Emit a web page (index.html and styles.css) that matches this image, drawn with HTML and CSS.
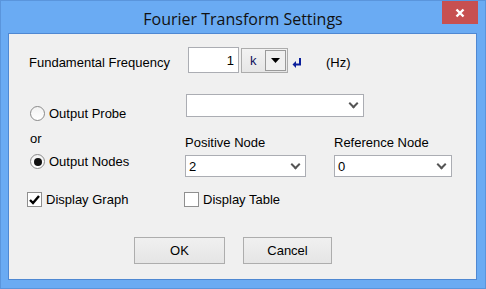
FILE: index.html
```html
<!DOCTYPE html>
<html lang="en">
<head>
  <meta charset="UTF-8">
  <title>Fourier Transform Settings</title>
  <link rel="stylesheet" href="styles.css">
</head>
<body>
  <div class="window">
    <div class="titlebar">
      <span class="title">Fourier Transform Settings</span>
      <button class="close-btn" aria-label="Close">
        <svg width="10" height="10" viewBox="0 0 10 10"><path d="M1.5 1.5 L8.5 8.5 M8.5 1.5 L1.5 8.5" stroke="#fff" stroke-width="2.4"/></svg>
      </button>
    </div>
    <div class="client">
      <div class="row freq-row">
        <span class="freq-label">Fundamental Frequency</span>
        <div class="freq-input">1</div>
        <div class="unit-combo">
          <span class="unit-text">k</span>
          <span class="unit-btn"><svg width="9" height="5" viewBox="0 0 9 5"><path d="M0 0 H9 L4.5 5 Z" fill="#000"/></svg></span>
        </div>
        <svg class="enter-icon" width="10" height="10" viewBox="0 0 10 10"><path d="M8 0 V6.5 H3" stroke="#0b1f9c" stroke-width="2" fill="none"/><path d="M0.5 6.5 L4 3 V10 Z" fill="#0b1f9c"/></svg>
        <span class="hz">(Hz)</span>
      </div>

      <div class="row probe-row">
        <label class="option col1 probe-option"><span class="radio"></span>Output Probe</label>
        <div class="select probe-select"><span></span><i class="chev"></i></div>
      </div>

      <div class="row label-row">
        <span class="col1 or">or</span>
        <span class="col2 node-label">Positive Node</span>
        <span class="node-label">Reference Node</span>
      </div>

      <div class="row nodes-row">
        <label class="option col1 nodes-option"><span class="radio checked"></span>Output Nodes</label>
        <div class="select pos-select"><span>2</span><i class="chev"></i></div>
        <div class="select ref-select"><span>0</span><i class="chev"></i></div>
      </div>

      <div class="row check-row">
        <label class="option check-first"><span class="checkbox checked"><svg width="11" height="10" viewBox="0 0 11 10"><path d="M1 5 L4 8 L10 1" stroke="#000" stroke-width="2.4" fill="none"/></svg></span>Display Graph</label>
        <label class="option"><span class="checkbox"></span>Display Table</label>
      </div>

      <div class="row button-row">
        <button class="dlg-btn ok-btn">OK</button>
        <button class="dlg-btn cancel-btn">Cancel</button>
      </div>
    </div>
  </div>
</body>
</html>
```

FILE: styles.css
```css
* {
  margin: 0;
  padding: 0;
  box-sizing: border-box;
}
body {
  width: 486px;
  height: 289px;
  overflow: hidden;
  font-family: 'Liberation Sans', Arial, sans-serif;
  font-size: 13px;
  color: #000;
}
.window {
  width: 486px;
  height: 289px;
  background: #6aabf3;
  border: 1px solid #5a95dc;
  display: flex;
  flex-direction: column;
}
.titlebar {
  position: relative;
  height: 32px;
  display: flex;
  justify-content: center;
  align-items: center;
  padding-top: 3px;
}
.title {
  font-family: 'Open Sans', 'Noto Sans', sans-serif;
  font-size: 16px;
  color: #111;
}
.close-btn {
  position: absolute;
  top: 0;
  right: 7px;
  width: 36px;
  height: 23px;
  border: none;
  background: #c75050;
  display: flex;
  align-items: center;
  justify-content: center;
}
.client {
  flex: 1;
  margin: 0 8px 8px 7px;
  background: #f0f0f0;
  border: 1px solid #4f88d2;
  padding: 13px 0 0 20px;
}
.row {
  display: flex;
  align-items: center;
}
.col1 {
  width: 156px;
  flex-shrink: 0;
}
.freq-row {
  height: 26px;
}
.freq-label {
  width: 159px;
  padding-top: 5px;
}
.freq-input {
  width: 51px;
  height: 26px;
  background: #fff;
  border: 1px solid #abadb3;
  text-align: right;
  padding: 5px 4px 0 0;
}
.unit-combo {
  width: 47px;
  height: 25px;
  margin-left: 2px;
  border: 1px solid #acacac;
  background: linear-gradient(#f2f2f2, #e6e6e6);
  display: flex;
  align-items: center;
  padding-left: 8px;
}
.unit-text {
  width: 15px;
  color: #10105a;
}
.unit-btn {
  width: 21px;
  height: 21px;
  border: 1px solid #9a9a9a;
  background: #f0f0f0;
  display: flex;
  align-items: center;
  justify-content: center;
}
.enter-icon {
  margin-left: 4px;
  margin-top: 6px;
}
.hz {
  margin-left: 24px;
  padding-top: 5px;
}
.option {
  display: flex;
  align-items: center;
}
.radio {
  width: 15px;
  height: 15px;
  flex-shrink: 0;
  border: 1px solid #8a8a8a;
  border-radius: 50%;
  background: linear-gradient(#f2f2f2, #ffffff);
  margin: 0 4px 0 1px;
  display: flex;
  align-items: center;
  justify-content: center;
}
.radio.checked::after {
  content: '';
  width: 8px;
  height: 8px;
  border-radius: 50%;
  background: #111;
}
.probe-row {
  margin-top: 21px;
  height: 23px;
  align-items: flex-start;
}
.probe-option {
  margin-top: 12px;
}
.select {
  height: 23px;
  background: #fff;
  border: 1px solid #abadb3;
  display: flex;
  align-items: center;
  justify-content: space-between;
  padding: 0 6px 0 3px;
}
.probe-select {
  width: 178px;
  margin-left: 1px;
}
.chev {
  width: 7px;
  height: 7px;
  border-right: 2px solid #555;
  border-bottom: 2px solid #555;
  transform: rotate(45deg);
  margin-top: -4px;
}
.label-row {
  height: 24px;
  margin-top: 14px;
  align-items: flex-start;
}
.or {
  line-height: 15px;
  padding-left: 1px;
}
.node-label {
  line-height: 15px;
  padding-top: 4px;
}
.col2 {
  width: 149px;
}
.nodes-row {
  height: 22px;
  align-items: flex-start;
}
.nodes-option {
  margin-top: -1px;
}
.pos-select {
  width: 121px;
  height: 22px;
}
.ref-select {
  width: 118px;
  height: 22px;
  margin-left: 28px;
}
.check-row {
  margin-top: 15px;
  height: 15px;
}
.check-first {
  width: 157px;
  margin-left: -2px;
}
.checkbox {
  width: 15px;
  height: 15px;
  flex-shrink: 0;
  border: 1px solid #8f8f8f;
  background: #fff;
  margin-right: 4px;
  display: flex;
  align-items: center;
  justify-content: center;
}
.button-row {
  margin-top: 30px;
  padding-left: 105px;
  gap: 18px;
}
.dlg-btn {
  height: 27px;
  border: 1px solid #adadad;
  background: linear-gradient(#f0f0f0, #e5e5e5);
  font-family: 'Liberation Sans', Arial, sans-serif;
  font-size: 13px;
  color: #000;
}
.ok-btn {
  width: 91px;
}
.cancel-btn {
  width: 89px;
}
```
